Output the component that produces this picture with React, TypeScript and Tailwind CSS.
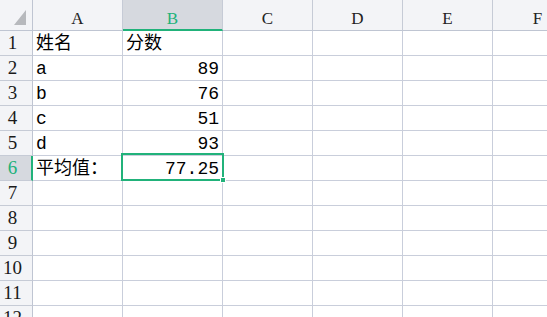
import React from "react";

type Row = { a?: string; b?: string; bAlign?: "left" | "right" };

const rows: Row[] = [
  { a: "姓名", b: "分数", bAlign: "left" },
  { a: "a", b: "89" },
  { a: "b", b: "76" },
  { a: "c", b: "51" },
  { a: "d", b: "93" },
  { a: "平均值：", b: "77.25" },
  {},
  {},
  {},
  {},
  {},
  {},
];

const letters = ["A", "B", "C", "D", "E", "F"];
const activeCol = "B";
const activeRow = 6;

export default function App() {
  return (
    <div className="relative h-[317px] w-[547px] overflow-hidden bg-white">
      <div className="grid grid-cols-[33px_90px_100px_90px_90px_90px_90px] grid-rows-[31px_repeat(12,25px)]">
        {/* corner */}
        <div className="relative border-b border-r border-[#bfc5d2] bg-[#f3f4f7]">
          <svg className="absolute left-[14px] top-[10px]" width="12" height="15" viewBox="0 0 12 15">
            <polygon points="12,0 12,15 0,15" fill="#b7b9bd" />
          </svg>
        </div>
        {letters.map((l) => {
          const on = l === activeCol;
          return (
            <div
              key={l}
              className={
                on
                  ? "flex items-end justify-center border-r border-b-2 border-r-[#c6cbd6] border-b-[#21b27a] bg-[#d6d9df] pb-[2px] font-['Liberation_Serif',serif] text-[17px] leading-none text-[#21b27a]"
                  : "flex items-end justify-center border-b border-r border-b-[#bfc5d2] border-r-[#c6cbd6] bg-[#f3f4f7] pb-[3px] font-['Liberation_Serif',serif] text-[17px] leading-none text-[#222]"
              }
            >
              {l}
            </div>
          );
        })}
        {rows.map((r, i) => {
          const n = i + 1;
          const on = n === activeRow;
          return (
            <React.Fragment key={n}>
              <div
                className={
                  on
                    ? "flex items-end justify-center border-b border-r-2 border-b-[#c6cbd6] border-r-[#21b27a] bg-[#d6d9df] pb-[3px] pr-[6px] font-['Liberation_Serif',serif] text-[19px] leading-none text-[#21b27a]"
                    : "flex items-end justify-center border-b border-r border-b-[#c6cbd6] border-r-[#bfc5d2] bg-[#f3f4f7] pb-[3px] pr-[7px] font-['Liberation_Serif',serif] text-[19px] leading-none text-[#1a1a1a]"
                }
              >
                {n}
              </div>
              <div className="flex items-end border-b border-r border-[#c9cedb] pb-[2px] pl-[3px] font-['Liberation_Mono','Noto_Sans_CJK_SC',monospace] text-[18px] leading-none text-black">
                {r.a}
              </div>
              <div
                className={
                  r.bAlign === "left"
                    ? "flex items-end border-b border-r border-[#c9cedb] pb-[2px] pl-[3px] font-['Liberation_Mono','Noto_Sans_CJK_SC',monospace] text-[18px] leading-none text-black"
                    : "flex items-end justify-end border-b border-r border-[#c9cedb] pb-[2px] pr-[3px] font-['Liberation_Mono','Noto_Sans_CJK_SC',monospace] text-[18px] leading-none text-black"
                }
              >
                {r.b}
              </div>
              <div className="border-b border-r border-[#c9cedb]" />
              <div className="border-b border-r border-[#c9cedb]" />
              <div className="border-b border-r border-[#c9cedb]" />
              <div className="border-b border-r border-[#c9cedb]" />
            </React.Fragment>
          );
        })}
      </div>

      {/* active cell outline with fill handle */}
      <div className="pointer-events-none absolute left-[121px] top-[153px] h-[28px] w-[103px] border-2 border-[#21b27a]">
        <div className="absolute -bottom-[4px] -right-[4px] h-[6px] w-[6px] border border-white bg-[#21b27a]" />
      </div>
    </div>
  );
}
